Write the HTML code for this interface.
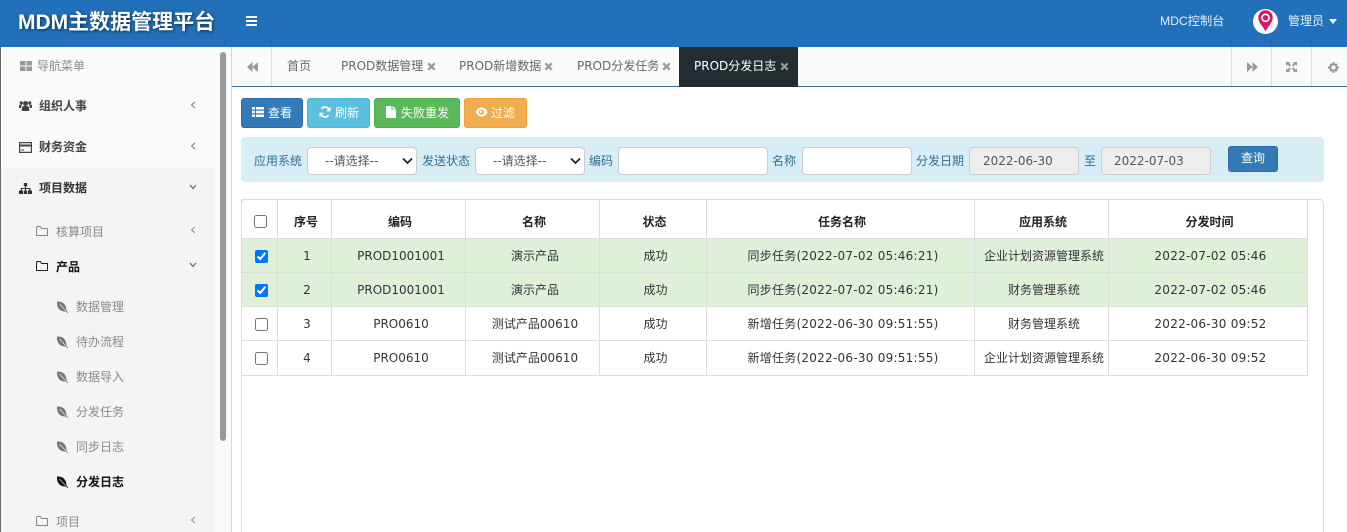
<!DOCTYPE html>
<html lang="zh"><head><meta charset="utf-8"><title>MDM主数据管理平台</title>
<style>
html,body{margin:0;padding:0;width:1347px;height:532px;overflow:hidden;background:#fff}
body{font-family:"DejaVu Sans","Noto Sans CJK SC",sans-serif;font-size:12px;color:#333;position:relative}
.a{position:absolute;white-space:nowrap}
svg{position:absolute;display:block}
.tb{position:absolute;left:241px;top:199px;border-collapse:collapse;table-layout:fixed;width:1067px;font-size:12px}
.tb th,.tb td{border:1px solid #ddd;text-align:center;padding:0;color:#333}
.tb th{font-weight:bold;height:34px;padding:4px 0 0 3px;color:#222}
.tb td{height:33px;padding-left:5px}
.tb td.l{height:33px;padding-bottom:1px}
.tb th.c{padding-left:1px}
.tb td.c{padding-left:3px}
.tb span{letter-spacing:.25px}
.tb tr.s td{background:#dff0d8}
.tb input{margin:0;width:13px;height:13px;vertical-align:middle}
.btn{position:absolute;top:98px;height:30px;border-radius:3px;color:#fff;line-height:29px;box-sizing:border-box;border:1px solid}
.ctl{position:absolute;top:147px;height:28px;box-sizing:border-box;border:1px solid #ccc;border-radius:4px;background:#fff;font-family:inherit;font-size:12px;color:#555;margin:0}
.lb{position:absolute;top:153px;color:#31708f;line-height:17px;white-space:nowrap}
.tab{position:absolute;top:58px;line-height:17px;color:#666;white-space:nowrap}
.x{position:absolute;top:62px;width:9px;height:9px}
.gr{color:#8a8a8a}
</style></head><body>

<div class="a" style="left:0;top:0;width:1347px;height:47px;background:#2270b9"></div>
<div class="a" style="left:18px;top:8px;font:bold 21px/30px 'Liberation Sans','Noto Sans CJK SC',sans-serif;color:#fff;text-shadow:1px 1px 3px rgba(0,0,0,.6)">MDM主数据管理平台</div>
<svg style="left:246px;top:16px" width="11" height="10" viewBox="0 0 11 10"><path d="M0 0h11v2H0zM0 4h11v2H0zM0 8h11v2H0z" fill="#fff"/></svg>
<div class="a" style="left:1160px;top:13px;color:#e6f0f8;line-height:17px;font-family:'Liberation Sans','Noto Sans CJK SC',sans-serif;font-size:12.2px">MDC控制台</div>
<div class="a" style="left:1253px;top:9px;width:25px;height:25px;border-radius:50%;background:#fff"></div>
<svg style="left:1258px;top:10px" width="15" height="22" viewBox="0 0 15 22"><path d="M7.500 21.500C5 16 .3 13 .3 7.500a7.200 7.200 0 0 1 14.400 0C14.700 13 10 16 7.500 21.500z" fill="#e0145f"/><circle cx="7.500" cy="7.800" r="4.400" fill="#fff"/><circle cx="7.500" cy="7.800" r="2.700" fill="#e0145f"/></svg>
<div class="a" style="left:1288px;top:13px;color:#e6f0f8;line-height:17px">管理员</div>
<svg style="left:1329px;top:19px" width="8" height="5" viewBox="0 0 8 5"><path d="M0 0h8L4 5z" fill="#fff"/></svg>

<!-- sidebar -->
<div class="a" style="left:0;top:47px;width:232px;height:485px;background:#f9fafc;border-right:1px solid #d2d6de;box-sizing:border-box"></div>
<div class="a" style="left:0;top:47px;width:1px;height:485px;background:#666"></div>
<div class="a" style="left:1px;top:168px;width:214px;height:364px;background:#f4f4f4"></div>
<div class="a" style="left:220px;top:52px;width:6px;height:389px;background:#999;border-radius:3px"></div>

<svg style="left:20px;top:61px" width="12" height="10" viewBox="0 0 12 10"><path d="M0 0h5.500v4.500H0zM6.500 0H12v4.500H6.500zM0 5.500h5.500V10H0zM6.500 5.500H12V10H6.500z" fill="#999"/></svg>
<div class="a gr" style="left:37px;top:58px;line-height:17px">导航菜单</div>

<svg style="left:19px;top:100px" width="13" height="12" viewBox="0 0 13 12"><g fill="#444"><circle cx="6.500" cy="3.500" r="2.500"/><circle cx="2.300" cy="2.800" r="1.600"/><circle cx="10.700" cy="2.800" r="1.600"/><path d="M2.800 11V8.300C2.800 6.500 4 6 6.500 6s3.700.5 3.700 2.300V11z"/><path d="M0 8V6c0-1 .8-1.600 2.200-1.600.4 0 .8.100 1 .2C2.400 5.500 2 6.500 2 8zM13 8V6c0-1-.8-1.600-2.200-1.600-.4 0-.8.100-1 .2.800.9 1.200 1.900 1.200 3.400z"/></g></svg>
<div class="a" style="left:39px;top:98px;line-height:17px;font-weight:bold;color:#444">组织人事</div>
<svg style="left:190px;top:101px" width="6" height="8" viewBox="0 0 6 8"><path d="M5 1L1.500 4 5 7" fill="none" stroke="#777" stroke-width="1"/></svg>

<svg style="left:19px;top:142px" width="13" height="11" viewBox="0 0 13 11"><path d="M.6.600h11.800v9.800H.6z" fill="none" stroke="#444" stroke-width="1.200"/><path d="M1 2.500h11v2H1zM2 7.500h3v1H2z" fill="#444"/></svg>
<div class="a" style="left:39px;top:139px;line-height:17px;font-weight:bold;color:#444">财务资金</div>
<svg style="left:190px;top:142px" width="6" height="8" viewBox="0 0 6 8"><path d="M5 1L1.500 4 5 7" fill="none" stroke="#777" stroke-width="1"/></svg>

<svg style="left:19px;top:183px" width="13" height="11" viewBox="0 0 13 11"><path d="M4.800 0h3.400v3.200H7V5h4.500v2.500h1.500V11H9V7.500h1.200V6H7v1.500h1.200V11H4.800V7.500H6V6H2.800v1.500H4V11H0V7.500h1.700V5H6V3.200H4.800z" fill="#333"/></svg>
<div class="a" style="left:39px;top:180px;line-height:17px;font-weight:bold;color:#333">项目数据</div>
<svg style="left:189px;top:184px" width="8" height="6" viewBox="0 0 8 6"><path d="M1 1l3 3.500L7 1" fill="none" stroke="#555" stroke-width="1"/></svg>

<svg style="left:36px;top:226px" width="12" height="10" viewBox="0 0 12 10"><path d="M.5 1.500V9.500h11V2.500H5.500L4.500 .5H1z" fill="none" stroke="#888" stroke-width="1"/></svg>
<div class="a gr" style="left:56px;top:224px;line-height:17px">核算项目</div>
<svg style="left:190px;top:226px" width="6" height="8" viewBox="0 0 6 8"><path d="M5 1L1.500 4 5 7" fill="none" stroke="#888" stroke-width="1"/></svg>

<svg style="left:36px;top:261px" width="12" height="10" viewBox="0 0 12 10"><path d="M.5 1.500V9.500h11V2.500H5.500L4.500 .5H1z" fill="none" stroke="#222" stroke-width="1"/></svg>
<div class="a" style="left:56px;top:259px;line-height:17px;font-weight:bold;color:#111">产品</div>
<svg style="left:189px;top:262px" width="8" height="6" viewBox="0 0 8 6"><path d="M1 1l3 3.500L7 1" fill="none" stroke="#555" stroke-width="1"/></svg>

<svg style="left:56px;top:301px" width="13" height="13" viewBox="0 0 13 13"><path d="M1 .5C7 .5 10.500 3 10.500 10.500 4.500 11 .5 7.500 1 .5z" fill="#777"/><path d="M3.500 3l6 6.500" fill="none" stroke="#f4f4f4" stroke-width=".6"/><path d="M10 10l2 2" fill="none" stroke="#777" stroke-width=".8"/></svg>
<div class="a gr" style="left:76px;top:299px;line-height:17px">数据管理</div>
<svg style="left:56px;top:336px" width="13" height="13" viewBox="0 0 13 13"><path d="M1 .5C7 .5 10.500 3 10.500 10.500 4.500 11 .5 7.500 1 .5z" fill="#777"/><path d="M3.500 3l6 6.500" fill="none" stroke="#f4f4f4" stroke-width=".6"/><path d="M10 10l2 2" fill="none" stroke="#777" stroke-width=".8"/></svg>
<div class="a gr" style="left:76px;top:334px;line-height:17px">待办流程</div>
<svg style="left:56px;top:371px" width="13" height="13" viewBox="0 0 13 13"><path d="M1 .5C7 .5 10.500 3 10.500 10.500 4.500 11 .5 7.500 1 .5z" fill="#777"/><path d="M3.500 3l6 6.500" fill="none" stroke="#f4f4f4" stroke-width=".6"/><path d="M10 10l2 2" fill="none" stroke="#777" stroke-width=".8"/></svg>
<div class="a gr" style="left:76px;top:369px;line-height:17px">数据导入</div>
<svg style="left:56px;top:406px" width="13" height="13" viewBox="0 0 13 13"><path d="M1 .5C7 .5 10.500 3 10.500 10.500 4.500 11 .5 7.500 1 .5z" fill="#777"/><path d="M3.500 3l6 6.500" fill="none" stroke="#f4f4f4" stroke-width=".6"/><path d="M10 10l2 2" fill="none" stroke="#777" stroke-width=".8"/></svg>
<div class="a gr" style="left:76px;top:404px;line-height:17px">分发任务</div>
<svg style="left:56px;top:441px" width="13" height="13" viewBox="0 0 13 13"><path d="M1 .5C7 .5 10.500 3 10.500 10.500 4.500 11 .5 7.500 1 .5z" fill="#777"/><path d="M3.500 3l6 6.500" fill="none" stroke="#f4f4f4" stroke-width=".6"/><path d="M10 10l2 2" fill="none" stroke="#777" stroke-width=".8"/></svg>
<div class="a gr" style="left:76px;top:439px;line-height:17px">同步日志</div>
<svg style="left:56px;top:476px" width="13" height="13" viewBox="0 0 13 13"><path d="M1 .5C7 .5 10.500 3 10.500 10.500 4.500 11 .5 7.500 1 .5z" fill="#111"/><path d="M3.500 3l6 6.500" fill="none" stroke="#f4f4f4" stroke-width=".6"/><path d="M10 10l2 2" fill="none" stroke="#111" stroke-width=".8"/></svg>
<div class="a" style="left:76px;top:474px;line-height:17px;font-weight:bold;color:#111">分发日志</div>

<svg style="left:36px;top:516px" width="12" height="10" viewBox="0 0 12 10"><path d="M.5 1.500V9.500h11V2.500H5.500L4.500 .5H1z" fill="none" stroke="#888" stroke-width="1"/></svg>
<div class="a gr" style="left:56px;top:514px;line-height:17px">项目</div>
<svg style="left:190px;top:516px" width="6" height="8" viewBox="0 0 6 8"><path d="M5 1L1.500 4 5 7" fill="none" stroke="#888" stroke-width="1"/></svg>

<!-- tabs -->
<div class="a" style="left:232px;top:47px;width:1115px;height:39px;background:#fafafa"></div>
<div class="a" style="left:232px;top:86px;width:1115px;height:1px;background:#3a6e8f"></div>
<div class="a" style="left:271px;top:47px;width:1px;height:39px;background:#ddd"></div>
<div class="a" style="left:1231px;top:47px;width:1px;height:39px;background:#ddd"></div>
<div class="a" style="left:1271px;top:47px;width:1px;height:39px;background:#ddd"></div>
<div class="a" style="left:1311px;top:47px;width:1px;height:39px;background:#ddd"></div>
<svg style="left:247px;top:62px" width="11" height="10" viewBox="0 0 11 10"><path d="M5.500 0v10L0 5zM11 0v10L5.500 5z" fill="#999"/></svg>
<svg style="left:1247px;top:62px" width="11" height="10" viewBox="0 0 11 10"><path d="M0 0v10l5.500-5zM5.500 0v10L11 5z" fill="#999"/></svg>
<svg style="left:1286px;top:62px" width="11" height="10" viewBox="0 0 11 10"><path d="M0 0h4L3 1l2 2.300-1.300 1.300L1.300 2.500 0 3.800zM11 0H7l1 1-2 2.300 1.300 1.300 2.400-2.100L11 3.800zM0 10h4L3 9l2-2.300-1.300-1.300L1.300 7.500 0 6.200zM11 10H7l1-1-2-2.300 1.300-1.300 2.400 2.100L11 6.200z" fill="#999"/></svg>
<svg style="left:1328px;top:62px" width="11" height="11" viewBox="0 0 11 11"><circle cx="5.500" cy="5.500" r="3.200" fill="none" stroke="#999" stroke-width="2.200"/><path d="M4.500 0h2v2h-2zM4.500 9h2v2h-2zM0 4.500h2v2H0zM9 4.500h2v2H9zM1.300 2.700L2.700 1.300 4 2.600 2.600 4zM8.300 9.700L9.700 8.300 8.400 7 7 8.400zM1.300 8.300L2.700 9.700 4 8.400 2.600 7zM9.700 2.700L8.300 1.300 7 2.600 8.400 4z" fill="#999"/></svg>

<div class="tab" style="left:287px">首页</div>
<div class="tab" style="left:341px">PROD数据管理</div>
<svg class="x" style="left:427px" viewBox="0 0 9 9"><path d="M1.300 1.300l6.400 6.400M7.700 1.300L1.300 7.700" stroke="#999" stroke-width="2.200"/></svg>
<div class="tab" style="left:459px">PROD新增数据</div>
<svg class="x" style="left:544px" viewBox="0 0 9 9"><path d="M1.300 1.300l6.400 6.400M7.700 1.300L1.300 7.700" stroke="#999" stroke-width="2.200"/></svg>
<div class="tab" style="left:577px">PROD分发任务</div>
<svg class="x" style="left:662px" viewBox="0 0 9 9"><path d="M1.300 1.300l6.400 6.400M7.700 1.300L1.300 7.700" stroke="#999" stroke-width="2.200"/></svg>
<div class="a" style="left:679px;top:47px;width:119px;height:40px;background:#222d32"></div>
<div class="tab" style="left:694px;color:#fff">PROD分发日志</div>
<svg class="x" style="left:780px" viewBox="0 0 9 9"><path d="M1.300 1.300l6.400 6.400M7.700 1.300L1.300 7.700" stroke="#999" stroke-width="2.200"/></svg>

<!-- buttons -->
<div class="btn" style="left:241px;width:62px;background:#337ab7;border-color:#2e6da4"><span class="a" style="left:26px;top:0">查看</span></div>
<svg style="left:252px;top:107px" width="12" height="10" viewBox="0 0 12 10"><path d="M0 0h3v2.500H0zM4 0h8v2.500H4zM0 3.700h3v2.600H0zM4 3.700h8v2.600H4zM0 7.500h3V10H0zM4 7.500h8V10H4z" fill="#fff"/></svg>
<div class="btn" style="left:307px;width:63px;background:#5bc0de;border-color:#46b8da"><span class="a" style="left:27px;top:0">刷新</span></div>
<svg style="left:319px;top:106px" width="12" height="12" viewBox="0 0 12 12"><path d="M10.300 4.500A4.500 4.500 0 0 0 2.500 2.700M1.700 7.500A4.500 4.500 0 0 0 9.500 9.300" fill="none" stroke="#fff" stroke-width="1.700"/><path d="M11.500 .8v4.400H7.200zM.5 11.200V6.800h4.300z" fill="#fff"/></svg>
<div class="btn" style="left:374px;width:86px;background:#5cb85c;border-color:#4cae4c"><span class="a" style="left:26px;top:0">失败重发</span></div>
<svg style="left:386px;top:106px" width="10" height="12" viewBox="0 0 10 12"><path d="M0 0h5.500v3.500H10V12H0zM6.500 0L10 2.700H6.500z" fill="#fff"/></svg>
<div class="btn" style="left:464px;width:63px;background:#f0ad4e;border-color:#eea236"><span class="a" style="left:26px;top:0">过滤</span></div>
<svg style="left:475px;top:107px" width="13" height="10" viewBox="0 0 13 10"><path d="M.5 5C2 2 4 .5 6.500.5S11 2 12.500 5C11 8 9 9.500 6.500 9.500S2 8 .5 5z" fill="#fff"/><circle cx="6.500" cy="5" r="2.700" fill="#f0ad4e"/><circle cx="6" cy="4.500" r="1.300" fill="#fff"/></svg>

<!-- filter -->
<div class="a" style="left:241px;top:137px;width:1083px;height:45px;background:#d9edf7;border-radius:4px"></div>
<div class="lb" style="left:254px">应用系统</div>
<div class="ctl" style="left:307px;width:110px;line-height:26px;padding-left:17px">--请选择--</div>
<svg style="left:402px;top:157px" width="11" height="8" viewBox="0 0 11 8"><path d="M1 1.500l4.500 4.500L10 1.500" fill="none" stroke="#222" stroke-width="1.800"/></svg>
<div class="lb" style="left:422px">发送状态</div>
<div class="ctl" style="left:475px;width:110px;line-height:26px;padding-left:17px">--请选择--</div>
<svg style="left:570px;top:157px" width="11" height="8" viewBox="0 0 11 8"><path d="M1 1.500l4.500 4.500L10 1.500" fill="none" stroke="#222" stroke-width="1.800"/></svg>
<div class="lb" style="left:589px">编码</div>
<div class="ctl" style="left:618px;width:150px"></div>
<div class="lb" style="left:772px">名称</div>
<div class="ctl" style="left:802px;width:110px"></div>
<div class="lb" style="left:916px">分发日期</div>
<div class="ctl" style="left:969px;width:110px;background:#eee;line-height:26px;padding-left:13px">2022-06-30</div>
<div class="lb" style="left:1084px">至</div>
<div class="ctl" style="left:1101px;width:110px;background:#eee;line-height:26px;padding-left:12px">2022-07-03</div>
<div class="a" style="left:1228px;top:146px;width:50px;height:26px;background:#337ab7;border:1px solid #2e6da4;border-radius:3px;box-sizing:border-box;color:#fff;text-align:center;line-height:23px">查询</div>

<!-- table panel -->
<div class="a" style="left:241px;top:199px;width:1083px;height:340px;border:1px solid #ddd;border-radius:4px;box-sizing:border-box"></div>
<table class="tb">
<colgroup><col style="width:36px"><col style="width:54px"><col style="width:134px"><col style="width:134px"><col style="width:107px"><col style="width:268px"><col style="width:134px"><col style="width:199px"></colgroup>
<tr><th class="c"><input type="checkbox"></th><th>序号</th><th>编码</th><th>名称</th><th>状态</th><th>任务名称</th><th>应用系统</th><th>分发时间</th></tr>
<tr class="s"><td class="c"><input type="checkbox" checked></td><td>1</td><td>PROD1001001</td><td>演示产品</td><td>成功</td><td><span>同步任务(2022-07-02 05:46:21)</span></td><td>企业计划资源管理系统</td><td><span>2022-07-02 05:46</span></td></tr>
<tr class="s"><td class="c"><input type="checkbox" checked></td><td>2</td><td>PROD1001001</td><td>演示产品</td><td>成功</td><td><span>同步任务(2022-07-02 05:46:21)</span></td><td>财务管理系统</td><td><span>2022-07-02 05:46</span></td></tr>
<tr><td class="c"><input type="checkbox"></td><td>3</td><td>PRO0610</td><td>测试产品00610</td><td>成功</td><td><span>新增任务(2022-06-30 09:51:55)</span></td><td>财务管理系统</td><td><span>2022-06-30 09:52</span></td></tr>
<tr><td class="l c"><input type="checkbox"></td><td class="l">4</td><td class="l">PRO0610</td><td class="l">测试产品00610</td><td class="l">成功</td><td class="l"><span>新增任务(2022-06-30 09:51:55)</span></td><td class="l">企业计划资源管理系统</td><td class="l"><span>2022-06-30 09:52</span></td></tr>
</table>
</body></html>
